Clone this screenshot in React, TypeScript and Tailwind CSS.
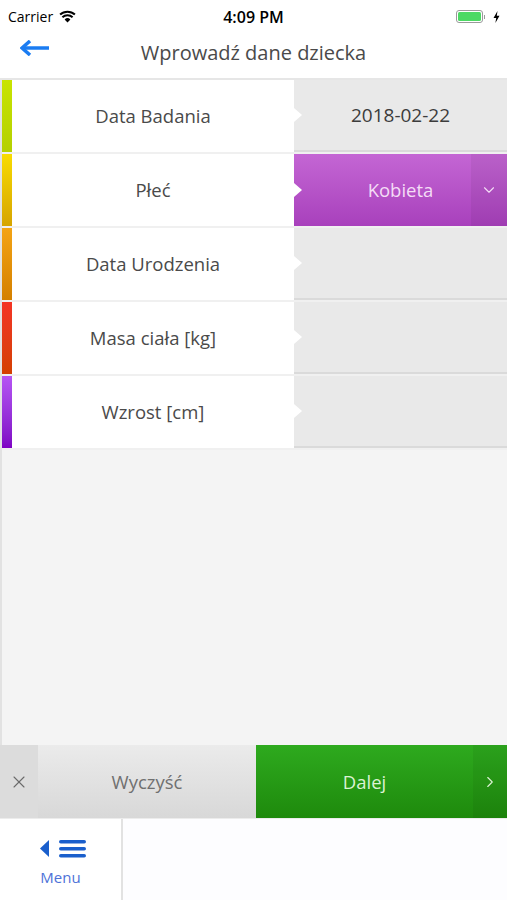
import { ChevronDown, ChevronRight, X } from "lucide-react";

const rows = [
  { label: "Data Badania", bar: "bg-gradient-to-b from-[#c8e400] to-[#b4d000]", value: "2018-02-22" },
  { label: "Płeć", bar: "bg-gradient-to-b from-[#f8dc00] to-[#d6a400]", value: "Kobieta", select: true },
  { label: "Data Urodzenia", bar: "bg-gradient-to-b from-[#f4a414] to-[#d48000]", value: "" },
  { label: "Masa ciała [kg]", bar: "bg-gradient-to-b from-[#f43424] to-[#d44000]", value: "" },
  { label: "Wzrost [cm]", bar: "bg-gradient-to-b from-[#b654f4] to-[#7e00c4]", value: "" },
];

function Notch() {
  // small white arrow sticking into the value cell
  return (
    <div className="absolute left-0 top-1/2 -translate-y-1/2 w-0 h-0 border-y-[7px] border-y-transparent border-l-[8px] border-l-white" />
  );
}

function StatusBar() {
  return (
    <div className="h-[33px] flex items-center justify-between pl-2 pr-[7px] text-black relative">
      <div className="flex items-center gap-1.5 text-[14px]">
        <span>Carrier</span>
        <svg width="17" height="13" viewBox="0 0 17 13">
          <path d="M8.5 12.5 L5.6 9.4 A4.2 4.2 0 0 1 11.4 9.4 Z" fill="black" />
          <path d="M3.4 7.2 A7.4 7.4 0 0 1 13.6 7.2" stroke="black" strokeWidth="2" fill="none" />
          <path d="M1.1 4.6 A10.8 10.8 0 0 1 15.9 4.6" stroke="black" strokeWidth="2" fill="none" />
        </svg>
      </div>
      <span className="absolute left-1/2 -translate-x-1/2 text-[16px] font-semibold">4:09 PM</span>
      <div className="flex items-center gap-1">
        <div className="w-[27px] h-[13px] rounded-[3px] border border-[#9a9a9a] p-[1px] flex">
          <div className="flex-1 rounded-[1.5px] bg-[#4cd964]" />
        </div>
        <div className="w-[1.5px] h-[4px] bg-[#9a9a9a] -ml-[3px]" />
        <svg width="7" height="12" viewBox="0 0 7 12" className="ml-1">
          <path d="M4.5 0 L0.5 7 H3.2 L2.4 12 L6.5 4.8 H3.8 Z" fill="black" />
        </svg>
      </div>
    </div>
  );
}

export default function App() {
  return (
    <div className="w-[507px] h-[900px] flex flex-col bg-[#f4f4f4] overflow-hidden" style={{ fontFamily: '"Open Sans", sans-serif' }}>
      <div className="bg-white">
        <StatusBar />
        <div className="h-[45px] flex items-center relative">
          <svg width="30" height="16" viewBox="0 0 30 16" className="absolute left-[20px] top-[7px]">
            <path d="M2 8 H29" stroke="#1a7cf2" strokeWidth="3.5" />
            <path d="M10 1 L2 8 L10 15" stroke="#1a7cf2" strokeWidth="3.5" fill="none" strokeLinejoin="miter" />
          </svg>
          <span className="flex-1 text-center text-[20px] text-[#4a4a4a] -mt-[6px]">Wprowadź dane dziecka</span>
        </div>
      </div>

      <div className="h-[2px] bg-[#e6e6e6]" />

      <div className="flex flex-col border-l-2 border-[#e2e2e2]">
        {rows.map((r) => (
          <div key={r.label} className="flex h-[74px] border-b-2 border-[#f0f0f0]">
            <div className={`w-[10px] ${r.bar}`} />
            <div className="w-[282px] bg-white flex items-center justify-center text-[18.5px] text-[#4a4a4a]">
              {r.label}
            </div>
            {r.select ? (
              <div className="flex-1 relative flex bg-gradient-to-b from-[#c466d4] to-[#a840bc]">
                <div className="flex-1 flex items-center justify-center pl-[36px] text-[18.5px] text-[#f4dcf6]">{r.value}</div>
                <div className="w-[36px] flex items-center justify-center bg-black/5">
                  <ChevronDown size={18} strokeWidth={1.5} color="#f4dcf6" />
                </div>
                <Notch />
              </div>
            ) : (
              <div className="flex-1 relative bg-[#e9e9e9] border-b-2 border-[#dadada] flex items-center justify-center text-[19px] text-[#3c3c3c]">
                {r.value}
                <Notch />
              </div>
            )}
          </div>
        ))}
      </div>

      <div className="flex-1 border-l-2 border-[#e2e2e2]" />

      <div className="h-[73px] flex">
        <div className="w-[38px] bg-[#dcdcdc] flex items-center justify-center">
          <X size={20} strokeWidth={1.3} color="#6a6a6a" />
        </div>
        <div className="w-[218px] bg-gradient-to-b from-[#ebebeb] to-[#d8d8d8] flex items-center justify-center text-[18.5px] text-[#707070]">
          Wyczyść
        </div>
        <div className="flex-1 flex bg-gradient-to-b from-[#2eaa1e] to-[#1e8a0c]">
          <div className="flex-1 flex items-center justify-center text-[18.5px] text-[#dcf2d4]">Dalej</div>
          <div className="w-[34px] flex items-center justify-center bg-black/5">
            <ChevronRight size={18} strokeWidth={1.5} color="#dcf2d4" />
          </div>
        </div>
      </div>

      <div className="h-[82px] flex bg-[#fdfdff] border-t border-[#ececec]">
        <div className="w-[123px] bg-white border-r-2 border-[#e2e2e2] flex flex-col items-center pt-[20px]">
          <svg width="48" height="20" viewBox="0 0 48 20" className="ml-[4px]">
            <path d="M10 1 L1 9.5 L10 18 Z" fill="#1a5fcc" />
            <rect x="20" y="1" width="27" height="3.5" rx="1.75" fill="#1a5fcc" />
            <rect x="20" y="8" width="27" height="3.5" rx="1.75" fill="#1a5fcc" />
            <rect x="20" y="15" width="27" height="3.5" rx="1.75" fill="#1a5fcc" />
          </svg>
          <span className="text-[15px] text-[#4e72d8] mt-[7px]">Menu</span>
        </div>
        <div className="flex-1" />
      </div>
    </div>
  );
}
